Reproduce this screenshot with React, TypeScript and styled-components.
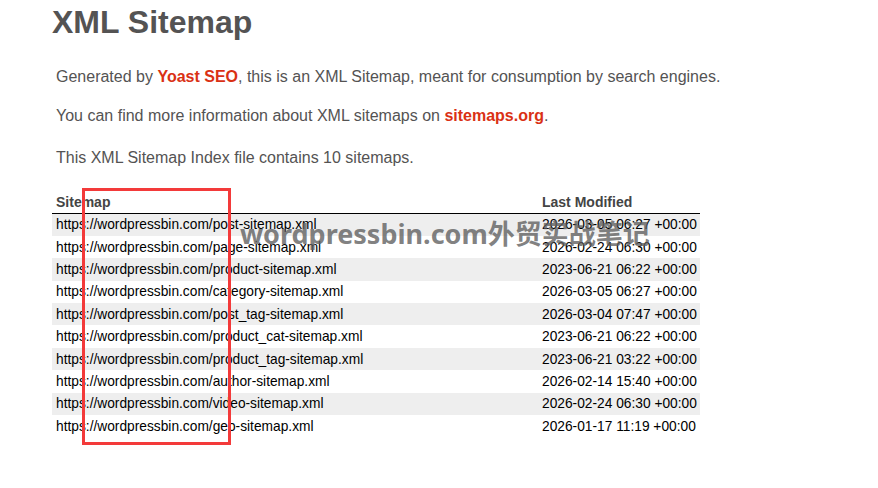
import React, { FC } from "react";
import styled, { createGlobalStyle } from "styled-components";

const sitemaps = [
    { loc: "https://wordpressbin.com/post-sitemap.xml", mod: "2026-03-05 06:27 +00:00" },
    { loc: "https://wordpressbin.com/page-sitemap.xml", mod: "2026-02-24 06:30 +00:00" },
    { loc: "https://wordpressbin.com/product-sitemap.xml", mod: "2023-06-21 06:22 +00:00" },
    { loc: "https://wordpressbin.com/category-sitemap.xml", mod: "2026-03-05 06:27 +00:00" },
    { loc: "https://wordpressbin.com/post_tag-sitemap.xml", mod: "2026-03-04 07:47 +00:00" },
    { loc: "https://wordpressbin.com/product_cat-sitemap.xml", mod: "2023-06-21 06:22 +00:00" },
    { loc: "https://wordpressbin.com/product_tag-sitemap.xml", mod: "2023-06-21 03:22 +00:00" },
    { loc: "https://wordpressbin.com/author-sitemap.xml", mod: "2026-02-14 15:40 +00:00" },
    { loc: "https://wordpressbin.com/video-sitemap.xml", mod: "2026-02-24 06:30 +00:00" },
    { loc: "https://wordpressbin.com/geo-sitemap.xml", mod: "2026-01-17 11:19 +00:00" },
]

const GlobalStyle = createGlobalStyle`
    body {
        margin: 0;
        background: #fff;
        font-family: "Liberation Sans", Arial, sans-serif;
        color: #545353;
    }
`

const App: FC = () => {
    return (
        <Page>
            <GlobalStyle />
            <Content>
                <Title>XML Sitemap</Title>
                <Intro>
                    <Text>
                        Generated by <Link href="#">Yoast SEO</Link>, this is an XML Sitemap, meant for consumption by search engines.
                    </Text>
                    <Text>
                        You can find more information about XML sitemaps on <Link href="#">sitemaps.org</Link>.
                    </Text>
                </Intro>
                <Count>This XML Sitemap Index file contains 10 sitemaps.</Count>
                <Table>
                    <thead>
                        <tr>
                            <Th $first>Sitemap</Th>
                            <Th>Last Modified</Th>
                        </tr>
                    </thead>
                    <tbody>
                        {sitemaps.map((s, i) => (
                            <Row key={i} $odd={i % 2 === 0}>
                                <Td>{s.loc}</Td>
                                <Td>{s.mod}</Td>
                            </Row>
                        ))}
                    </tbody>
                </Table>
            </Content>
            <Highlight />
            <Watermark>wordpressbin.com外贸实战笔记</Watermark>
        </Page>
    )
}

const Page = styled.div`
    position: relative;
    width: 878px;
    height: 488px;
    overflow: hidden;
`
const Content = styled.div`
    padding-left: 52px;
    width: 760px;
`
const Title = styled.h1`
    margin: 4px 0 0;
    font-size: 32px;
    font-weight: bold;
    line-height: 37px;
    color: #545353;
`
const Intro = styled.div`
    margin-top: 27px;
`
const Text = styled.p`
    margin: 0 0 21px 4px;
    font-size: 16px;
    line-height: 18px;
    white-space: nowrap;
`
const Count = styled(Text)`
    margin-top: 24px;
    margin-bottom: 27px;
`
const Link = styled.a`
    color: #da3114;
    font-weight: bold;
    text-decoration: none;
`
const Table = styled.table`
    width: 648px;
    border-collapse: collapse;
    table-layout: fixed;
    font-size: 13.75px;
`
const Th = styled.th<{ $first?: boolean }>`
    text-align: left;
    color: #444;
    font-size: 14px;
    font-weight: bold;
    padding: 0 0 3px 4px;
    border-bottom: 1px solid #000;
    width: ${p => p.$first ? '482px' : 'auto'};
`
const Row = styled.tr<{ $odd: boolean }>`
    background: ${p => p.$odd ? '#eee' : 'transparent'};
    height: 22.4px;
`
const Td = styled.td`
    padding: 0 0 0 4px;
    color: #000;
    white-space: nowrap;
`
const Highlight = styled.div`
    position: absolute;
    left: 82px;
    top: 188px;
    width: 143px;
    height: 251px;
    border: 3px solid #f33a3a;
`
const Watermark = styled.div`
    position: absolute;
    left: 240px;
    top: 217px;
    font-family: "Noto Sans", "Noto Sans CJK SC", sans-serif;
    font-size: 27px;
    font-weight: bold;
    line-height: 34px;
    color: rgba(95, 95, 95, 0.8);
    white-space: nowrap;
`

export default App
